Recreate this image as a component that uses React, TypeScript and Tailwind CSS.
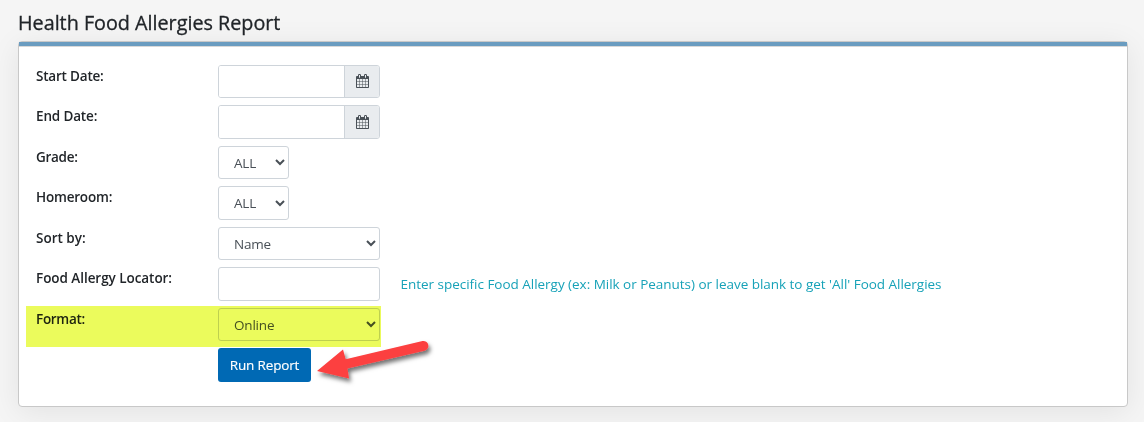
import type { ReactNode } from 'react';

function CalendarIcon() {
  return (
    <svg viewBox="0 0 1664 1792" className="mb-[0.75px] h-[14px] w-[13px] fill-[#495057]">
      <path d="M128 1664h288v-288h-288v288zm352 0h320v-288h-320v288zm-352-352h288v-320h-288v320zm352 0h320v-320h-320v320zm-352-384h288v-288h-288v288zm736 736h320v-288h-320v288zm-384-736h320v-288h-320v288zm768 736h288v-288h-288v288zm-384-352h320v-320h-320v320zm-352-864v-288q0-13-9.500-22.500t-22.500-9.500h-64q-13 0-22.500 9.500t-9.500 22.500v288q0 13 9.500 22.500t22.500 9.500h64q13 0 22.500-9.500t9.500-22.500zm736 864h288v-320h-288v320zm-384-384h320v-288h-320v288zm384 0h288v-288h-288v288zm32-480v-288q0-13-9.500-22.500t-22.500-9.500h-64q-13 0-22.500 9.500t-9.500 22.500v288q0 13 9.500 22.500t22.500 9.500h64q13 0 22.500-9.500t9.500-22.500zm384-64v1280q0 52-38 90t-90 38h-1408q-52 0-90-38t-38-90v-1280q0-52 38-90t90-38h128v-96q0-66 47-113t113-47h64q66 0 113 47t47 113v96h384v-96q0-66 47-113t113-47h64q66 0 113 47t47 113v96h128q52 0 90 38t38 90z" />
    </svg>
  );
}

function Row({ label, tracking, children }: { label: string; tracking?: string; children: ReactNode }) {
  return (
    <div className="flex h-[40.5px] items-start">
      <div className={`w-[182px] pt-px text-[13.5px] leading-[21px] font-semibold whitespace-nowrap ${tracking ?? ''}`}>{label}</div>
      {children}
    </div>
  );
}

function DateField({ label }: { label: string }) {
  return (
    <div className="flex h-[33.5px] w-[162px] overflow-hidden rounded-[3px] border border-[#ced4da]">
      <input aria-label={label} className="w-[125px] bg-white px-3 outline-none" />
      <button aria-label="Open calendar" className="flex flex-1 items-center justify-center border-l border-[#ced4da] bg-[#e9ecef]">
        <CalendarIcon />
      </button>
    </div>
  );
}

function Select({ value, width }: { value: string; width: string }) {
  return (
    <select
      aria-label={value}
      className={`h-[33.5px] rounded-[3px] border border-[#ced4da] bg-white px-[11px] text-[13.5px] tracking-[-0.2px] text-[#495057] outline-none ${width}`}
    >
      <option>{value}</option>
    </select>
  );
}

function Arrow() {
  return (
    <svg className="absolute top-[293px] left-[291px] overflow-visible" width="120" height="50" viewBox="310 335 120 50">
      <defs>
        <filter id="arrowShadow" x="-20%" y="-30%" width="140%" height="180%">
          <feDropShadow dx="2" dy="3.5" stdDeviation="2" floodColor="#000" floodOpacity="0.55" />
        </filter>
      </defs>
      <path
        d="M317 371L343 349.500L345.700 359.200L422.500 341.100A4.900 4.900 0 0 1 424.500 350.700L347.500 368.500L349 378.500Z"
        fill="#fc4040"
        filter="url(#arrowShadow)"
      />
    </svg>
  );
}

export default function App() {
  return (
    <div className="h-[422px] overflow-hidden bg-[#f5f5f5] px-[18px] font-['Open_Sans','Noto_Sans',sans-serif] text-[#212529]">
      <h1 className="h-[41px] pt-[9px] text-[19.75px] leading-[28px] whitespace-nowrap [-webkit-text-stroke:0.3px_#212529]">Health Food Allergies Report</h1>
      <main className="relative h-[366px] w-[1110px] rounded-[4px] border border-[#c8c8c8] bg-white shadow-[0_5px_30px_rgba(0,0,0,0.08)]">
        <div className="h-[5px] border-b border-[#d8d8d8] bg-[#6a9cc0]" />
        <div className="pt-[17.75px] pl-[17px]">
          <Row label="Start Date:" tracking="tracking-[-0.2px]"><DateField label="Start Date" /></Row>
          <Row label="End Date:" tracking="tracking-[-0.15px]"><DateField label="End Date" /></Row>
          <Row label="Grade:" tracking="tracking-[-0.3px]"><Select value="ALL" width="w-[71px]" /></Row>
          <Row label="Homeroom:" tracking="tracking-[-0.2px]"><Select value="ALL" width="w-[71px]" /></Row>
          <Row label="Sort by:"><Select value="Name" width="w-[162px]" /></Row>
          <Row label="Food Allergy Locator:" tracking="tracking-[-0.05px]">
            <input aria-label="Food Allergy Locator" className="h-[33.5px] w-[162px] rounded-[3px] border border-[#ced4da] bg-white px-3 outline-none" />
            <span className="ml-[20.5px] pt-[7px] text-[13.5px] leading-[21px] tracking-[-0.025px] whitespace-nowrap text-[#17a2b8]">
              Enter specific Food Allergy (ex: Milk or Peanuts) or leave blank to get 'All' Food Allergies
            </span>
          </Row>
          <Row label="Format:" tracking="tracking-[-0.3px]"><Select value="Online" width="w-[162px]" /></Row>
          <Row label="">
            <button className="h-[33.5px] w-[93px] rounded-[3px] bg-[#0069b4] text-[13.5px] tracking-[-0.15px] whitespace-nowrap text-white [-webkit-text-stroke:0.15px_white]">Run Report</button>
          </Row>
        </div>
        <div className="pointer-events-none absolute top-[264px] left-[7px] h-[41px] w-[355px] bg-[#ebfb5c] mix-blend-multiply" />
        <Arrow />
      </main>
    </div>
  );
}
